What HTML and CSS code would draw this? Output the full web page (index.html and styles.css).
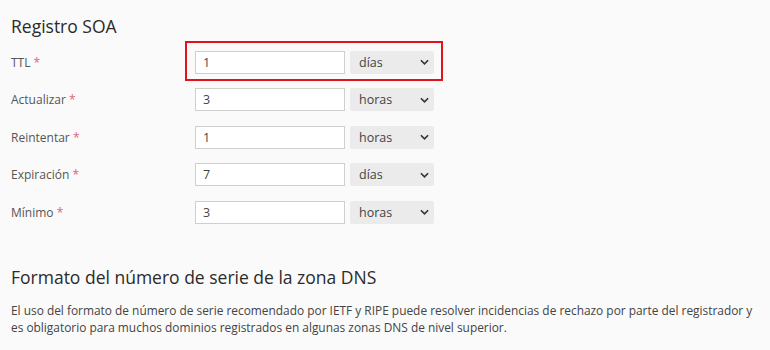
FILE: index.html
```html
<!DOCTYPE html>
<html lang="es">
<head>
<meta charset="utf-8">
<link rel="stylesheet" href="styles.css">
</head>
<body>
<div class="page">
  <h2 class="title">Registro SOA</h2>
  <div class="rows">
    <div class="row">
      <label class="label">TTL <span class="req">*</span></label>
      <div class="controls highlight">
        <div class="input">1</div>
        <div class="select"><span>días</span><svg class="chev" viewBox="0 0 10 6" width="9" height="6"><path d="M1 1l4 4 4-4" fill="none" stroke="#333" stroke-width="1.8"/></svg></div>
      </div>
    </div>
    <div class="row">
      <label class="label">Actualizar <span class="req">*</span></label>
      <div class="controls">
        <div class="input">3</div>
        <div class="select"><span>horas</span><svg class="chev" viewBox="0 0 10 6" width="9" height="6"><path d="M1 1l4 4 4-4" fill="none" stroke="#333" stroke-width="1.8"/></svg></div>
      </div>
    </div>
    <div class="row">
      <label class="label">Reintentar <span class="req">*</span></label>
      <div class="controls">
        <div class="input">1</div>
        <div class="select"><span>horas</span><svg class="chev" viewBox="0 0 10 6" width="9" height="6"><path d="M1 1l4 4 4-4" fill="none" stroke="#333" stroke-width="1.8"/></svg></div>
      </div>
    </div>
    <div class="row">
      <label class="label">Expiración <span class="req">*</span></label>
      <div class="controls">
        <div class="input">7</div>
        <div class="select"><span>días</span><svg class="chev" viewBox="0 0 10 6" width="9" height="6"><path d="M1 1l4 4 4-4" fill="none" stroke="#333" stroke-width="1.8"/></svg></div>
      </div>
    </div>
    <div class="row">
      <label class="label">Mínimo <span class="req">*</span></label>
      <div class="controls">
        <div class="input">3</div>
        <div class="select"><span>horas</span><svg class="chev" viewBox="0 0 10 6" width="9" height="6"><path d="M1 1l4 4 4-4" fill="none" stroke="#333" stroke-width="1.8"/></svg></div>
      </div>
    </div>
  </div>
  <h2 class="title second">Formato del número de serie de la zona DNS</h2>
  <p class="text">El uso del formato de número de serie recomendado por IETF y RIPE puede resolver incidencias de rechazo por parte del registrador y es obligatorio para muchos dominios registrados en algunas zonas DNS de nivel superior.</p>
</div>
</body>
</html>
```
FILE: styles.css
```css
html, body {
  margin: 0;
  padding: 0;
  background: #fafafa;
}
body {
  font-family: "Open Sans", "DejaVu Sans", sans-serif;
  color: #333;
}
.page {
  padding: 14px 12px 0 11px;
}
.title {
  margin: 0;
  font-size: 17.5px;
  font-weight: 400;
  line-height: 24px;
  color: #2b2b2b;
}
.rows {
  margin-top: 12.5px;
  display: flex;
  flex-direction: column;
  gap: 14.5px;
}
.row {
  display: flex;
  align-items: center;
  height: 23px;
}
.label {
  width: 184px;
  font-size: 12px;
  color: #555;
}
.req {
  color: #e0627a;
}
.controls {
  display: flex;
  gap: 5px;
  position: relative;
}
.highlight::before {
  content: "";
  position: absolute;
  left: -10px;
  top: -10px;
  right: -9px;
  bottom: -7px;
  border: 2px solid #e0141e;
}
.input {
  box-sizing: border-box;
  width: 150px;
  height: 23px;
  border: 1px solid #cfcfcf;
  background: #fff;
  padding: 0 7px;
  font-size: 12.5px;
  line-height: 21px;
  color: #444;
}
.select {
  box-sizing: border-box;
  width: 84px;
  height: 23px;
  background: #ebebeb;
  border-radius: 2px;
  display: flex;
  align-items: center;
  justify-content: space-between;
  padding: 0 5px 0 9px;
  font-size: 12.5px;
  color: #444;
}
.chev {
  display: block;
}
.second {
  margin-top: 41px;
}
.text {
  margin: 13.5px 0 0;
  font-size: 11.9px;
  line-height: 17px;
  color: #444;
}
```
